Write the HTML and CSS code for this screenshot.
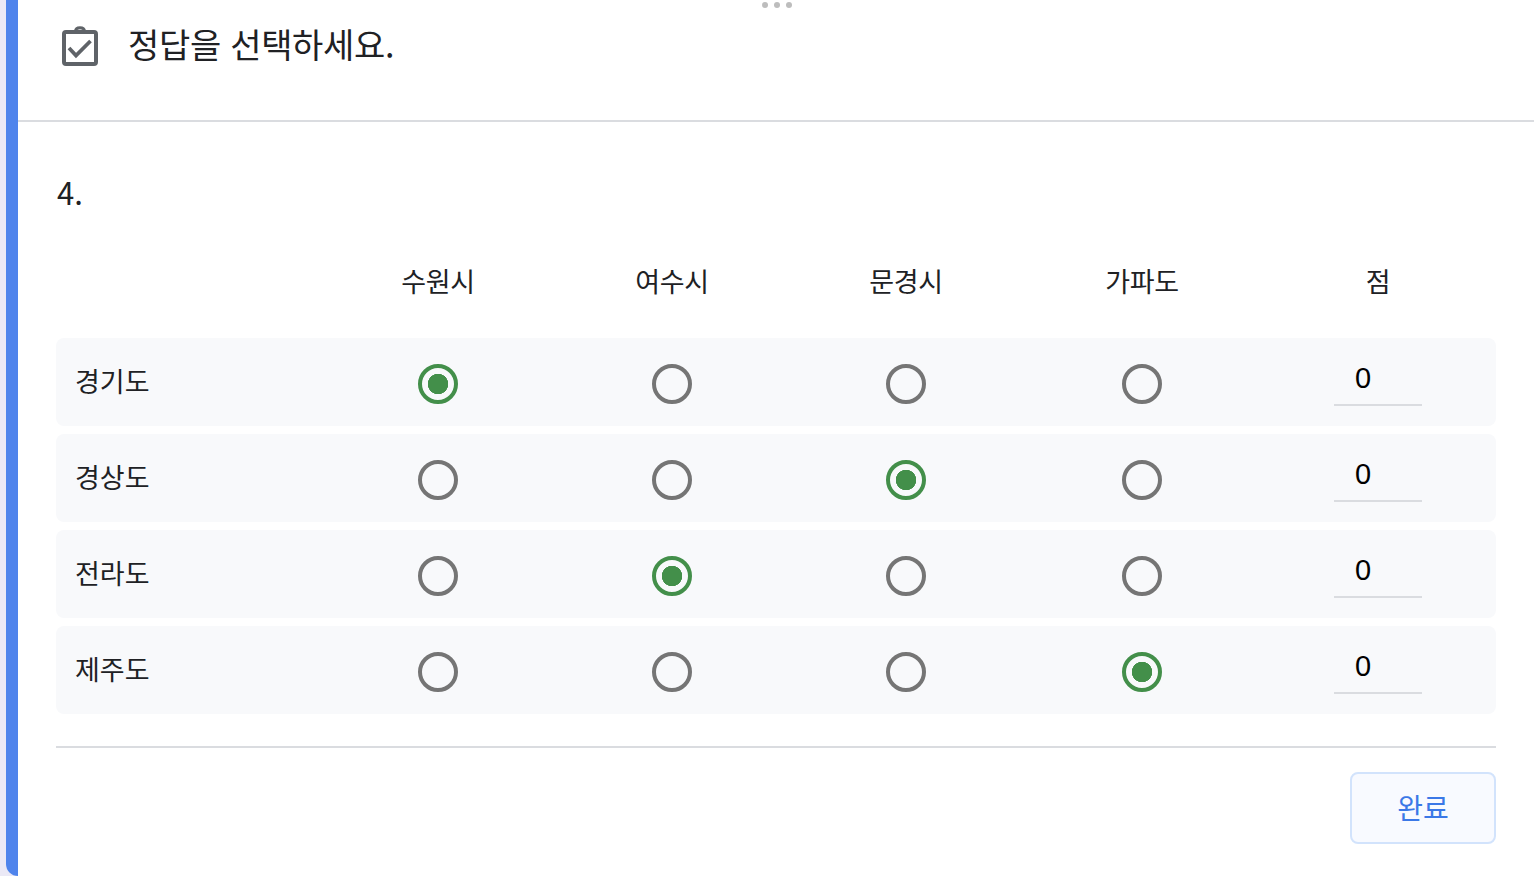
FILE: index.html
```html
<!DOCTYPE html>
<html lang="ko">
<head>
    <meta charset="UTF-8">
    <meta name="viewport" content="width=device-width, initial-scale=1.0">
    <title>정답을 선택하세요</title>
    <link rel="stylesheet" href="styles.css">
</head>
<body>
    <div class="card">
        <!-- Drag handle -->
        <div class="drag-handle"><span></span><span></span><span></span></div>

        <div class="card-header">
            <svg class="header-icon" viewBox="0 0 40 44" xmlns="http://www.w3.org/2000/svg">
                <path d="M15.5 7 C15.8 2.6 24.2 2.6 24.5 7" fill="none" stroke="#5f6368" stroke-width="3"/>
                <rect x="4" y="8" width="32" height="32" rx="2" fill="none" stroke="#5f6368" stroke-width="4"/>
                <rect x="14" y="6" width="12" height="4" fill="#5f6368"/>
                <path d="M9 24 L16 31.5 L30.5 17" fill="none" stroke="#5f6368" stroke-width="3.8"/>
            </svg>
            <h1 class="header-title">정답을 선택하세요.</h1>
        </div>

        <div class="card-body">
            <div class="question-no">4.</div>

            <div class="grid-head">
                <div></div>
                <div>수원시</div>
                <div>여수시</div>
                <div>문경시</div>
                <div>가파도</div>
                <div>점</div>
            </div>

            <div class="grid-rows">
                <div class="grid-row">
                    <div class="row-label">경기도</div>
                    <div class="cell"><input class="radio" type="radio" name="r1" checked></div>
                    <div class="cell"><input class="radio" type="radio" name="r1"></div>
                    <div class="cell"><input class="radio" type="radio" name="r1"></div>
                    <div class="cell"><input class="radio" type="radio" name="r1"></div>
                    <div class="cell"><input class="score" type="text" value="0"></div>
                </div>
                <div class="grid-row">
                    <div class="row-label">경상도</div>
                    <div class="cell"><input class="radio" type="radio" name="r2"></div>
                    <div class="cell"><input class="radio" type="radio" name="r2"></div>
                    <div class="cell"><input class="radio" type="radio" name="r2" checked></div>
                    <div class="cell"><input class="radio" type="radio" name="r2"></div>
                    <div class="cell"><input class="score" type="text" value="0"></div>
                </div>
                <div class="grid-row">
                    <div class="row-label">전라도</div>
                    <div class="cell"><input class="radio" type="radio" name="r3"></div>
                    <div class="cell"><input class="radio" type="radio" name="r3" checked></div>
                    <div class="cell"><input class="radio" type="radio" name="r3"></div>
                    <div class="cell"><input class="radio" type="radio" name="r3"></div>
                    <div class="cell"><input class="score" type="text" value="0"></div>
                </div>
                <div class="grid-row">
                    <div class="row-label">제주도</div>
                    <div class="cell"><input class="radio" type="radio" name="r4"></div>
                    <div class="cell"><input class="radio" type="radio" name="r4"></div>
                    <div class="cell"><input class="radio" type="radio" name="r4"></div>
                    <div class="cell"><input class="radio" type="radio" name="r4" checked></div>
                    <div class="cell"><input class="score" type="text" value="0"></div>
                </div>
            </div>

            <div class="card-footer">
                <button class="done-btn" type="button">완료</button>
            </div>
        </div>
    </div>
</body>
</html>
```

FILE: styles.css
```css
html,
body {
    margin: 0;
    height: 100%;
    overflow: hidden;
}

body {
    background-color: #ebe9f6;
    font-family: "Noto Sans CJK KR", "Noto Sans", sans-serif;
    color: #202124;
}

/* Card with the blue accent edge */
.card {
    position: relative;
    box-sizing: border-box;
    height: 876px;
    margin-left: 6px;
    background-color: #fff;
    border-left: 12px solid #4f84ec;
    border-bottom-left-radius: 12px;
}

.drag-handle {
    position: absolute;
    top: 2px;
    left: 744px;
    display: flex;
    gap: 6px;
}

.drag-handle span {
    width: 6px;
    height: 6px;
    border-radius: 50%;
    background-color: #bdbdbd;
}

/* Header */
.card-header {
    box-sizing: border-box;
    height: 122px;
    display: flex;
    align-items: flex-start;
    padding: 24px 0 0 42px;
    border-bottom: 2px solid #dadce0;
}

.header-icon {
    width: 40px;
    height: 44px;
}

.header-title {
    margin: 0 0 0 28px;
    font-size: 34px;
    font-weight: 400;
    line-height: 40px;
    letter-spacing: -0.3px;
}

/* Body */
.card-body {
    padding: 0 38px;
}

.question-no {
    padding: 50px 0 0 1px;
    font-size: 31px;
    line-height: 40px;
}

.grid-head,
.grid-row {
    display: grid;
    grid-template-columns: 265px 234px 234px 234px 238px 234px;
    width: 1440px;
}

.grid-head {
    margin-top: 49px;
    height: 69px;
    font-size: 27px;
    line-height: 40px;
    letter-spacing: -0.3px;
    text-align: center;
}

.grid-rows {
    display: flex;
    flex-direction: column;
    gap: 8px;
    margin-top: 8px;
}

.grid-row {
    height: 88px;
    align-items: center;
    background-color: #f8f9fb;
    border-radius: 8px;
}

.row-label {
    padding-left: 19px;
    font-size: 27px;
    line-height: 40px;
    margin-top: -2px;
}

.cell {
    display: flex;
    justify-content: center;
}

/* Radio buttons */
.radio {
    appearance: none;
    box-sizing: border-box;
    width: 40px;
    height: 40px;
    margin: 4px 0 0;
    border: 4px solid #757575;
    border-radius: 50%;
    background-color: transparent;
}

.radio:checked {
    border-color: #438f4a;
    background: radial-gradient(circle, #438f4a 0, #438f4a 10px, transparent 10.5px);
}

/* Score field */
.score {
    box-sizing: border-box;
    width: 88px;
    height: 46px;
    margin-top: 2px;
    padding: 0 0 8px 21px;
    border: 0;
    border-bottom: 2px solid #dadce0;
    background: transparent;
    font-family: "Liberation Sans", sans-serif;
    font-size: 29px;
    color: #000;
}

/* Footer */
.card-footer {
    display: flex;
    justify-content: flex-end;
    margin-top: 32px;
    padding-top: 24px;
    border-top: 2px solid #dadce0;
}

.done-btn {
    box-sizing: border-box;
    width: 146px;
    height: 72px;
    padding: 0 0 2px;
    background-color: #f8faff;
    border: 2px solid #d2e3fc;
    border-radius: 8px;
    color: #3b78e7;
    font-family: "Noto Sans CJK KR", sans-serif;
    font-size: 28px;
}
```
